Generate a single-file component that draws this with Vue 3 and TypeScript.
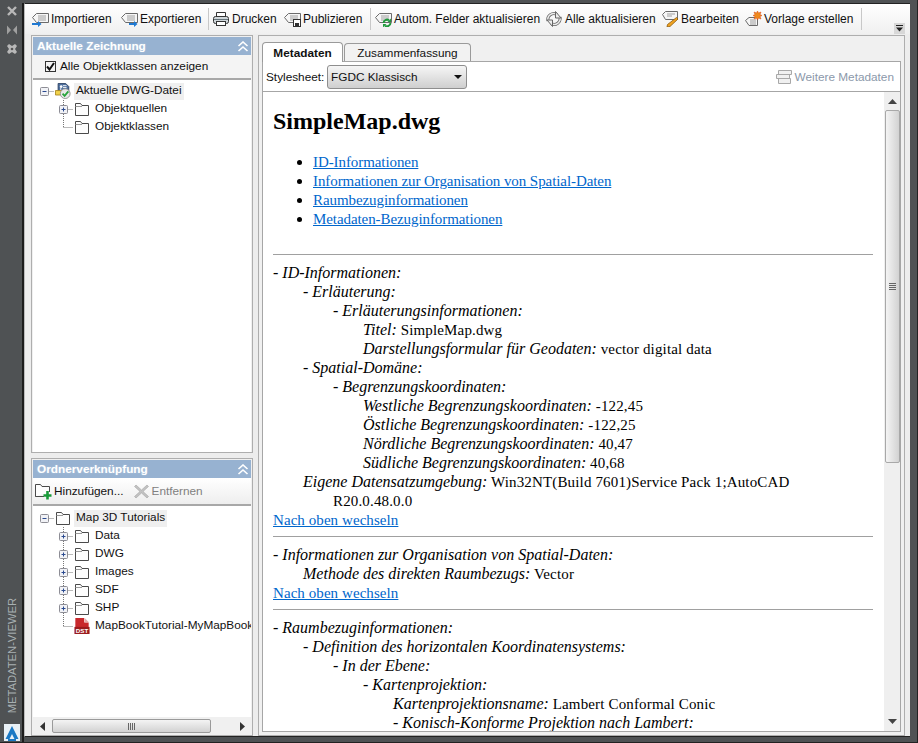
<script setup lang="ts">
interface Tool { label: string; icon: string; w: number; sep?: boolean }
interface Line { lvl: number; key?: string; val?: string; link?: string }
interface Node { label: string; kind: 'root' | 'child'; icon: string; toggle: boolean; last?: boolean }

const tools: Tool[] = [
  { label: 'Importieren', icon: 'i-import', w: 89 },
  { label: 'Exportieren', icon: 'i-export', w: 88, sep: true },
  { label: 'Drucken', icon: 'i-print', w: 71 },
  { label: 'Publizieren', icon: 'i-publish', w: 87, sep: true },
  { label: 'Autom. Felder aktualisieren', icon: 'i-auto', w: 171 },
  { label: 'Alle aktualisieren', icon: 'i-all', w: 116 },
  { label: 'Bearbeiten', icon: 'i-edit', w: 83 },
  { label: 'Vorlage erstellen', icon: 'i-new', w: 117, sep: true },
]

const links = [
  'ID-Informationen',
  'Informationen zur Organisation von Spatial-Daten',
  'Raumbezuginformationen',
  'Metadaten-Bezuginformationen',
]

const sections: Line[][] = [
  [
    { lvl: 0, key: '- ID-Informationen:' },
    { lvl: 1, key: '- Erläuterung:' },
    { lvl: 2, key: '- Erläuterungsinformationen:' },
    { lvl: 3, key: 'Titel:', val: 'SimpleMap.dwg' },
    { lvl: 3, key: 'Darstellungsformular für Geodaten:', val: 'vector digital data' },
    { lvl: 1, key: '- Spatial-Domäne:' },
    { lvl: 2, key: '- Begrenzungskoordinaten:' },
    { lvl: 3, key: 'Westliche Begrenzungskoordinaten:', val: '-122,45' },
    { lvl: 3, key: 'Östliche Begrenzungskoordinaten:', val: '-122,25' },
    { lvl: 3, key: 'Nördliche Begrenzungskoordinaten:', val: '40,47' },
    { lvl: 3, key: 'Südliche Begrenzungskoordinaten:', val: '40,68' },
    { lvl: 1, key: 'Eigene Datensatzumgebung:', val: 'Win32NT(Build 7601)Service Pack 1;AutoCAD R20.0.48.0.0' },
    { lvl: 0, link: 'Nach oben wechseln' },
  ],
  [
    { lvl: 0, key: '- Informationen zur Organisation von Spatial-Daten:' },
    { lvl: 1, key: 'Methode des direkten Raumbezugs:', val: 'Vector' },
    { lvl: 0, link: 'Nach oben wechseln' },
  ],
  [
    { lvl: 0, key: '- Raumbezuginformationen:' },
    { lvl: 1, key: '- Definition des horizontalen Koordinatensystems:' },
    { lvl: 2, key: '- In der Ebene:' },
    { lvl: 3, key: '- Kartenprojektion:' },
    { lvl: 4, key: 'Kartenprojektionsname:', val: 'Lambert Conformal Conic' },
    { lvl: 4, key: '- Konisch-Konforme Projektion nach Lambert:' },
  ],
]

const treeA: Node[] = [
  { label: 'Aktuelle DWG-Datei', kind: 'root', icon: 'i-dwg', toggle: true },
  { label: 'Objektquellen', kind: 'child', icon: 'i-folder', toggle: true },
  { label: 'Objektklassen', kind: 'child', icon: 'i-folder', toggle: false, last: true },
]
const treeB: Node[] = [
  { label: 'Map 3D Tutorials', kind: 'root', icon: 'i-folder', toggle: true },
  { label: 'Data', kind: 'child', icon: 'i-folder', toggle: true },
  { label: 'DWG', kind: 'child', icon: 'i-folder', toggle: true },
  { label: 'Images', kind: 'child', icon: 'i-folder', toggle: true },
  { label: 'SDF', kind: 'child', icon: 'i-folder', toggle: true },
  { label: 'SHP', kind: 'child', icon: 'i-folder', toggle: true },
  { label: 'MapBookTutorial-MyMapBook', kind: 'child', icon: 'i-dst', toggle: false, last: true },
]
const trees = { a: treeA, b: treeB }
</script>

<template>
  <div class="frame">
    <svg class="defs" aria-hidden="true">
      <symbol id="i-tag" viewBox="0 0 18 16">
        <path d="M1.500 6.500 5.500 2.500H17.500V11.500H5.500Z" fill="#f6f6f6" stroke="#6b6b6b" />
        <path d="M7 5H15M7 7H15M7 9H15" stroke="#a0a0a0" />
      </symbol>
      <symbol id="i-import" viewBox="0 0 18 16">
        <use href="#i-tag" width="18" height="16" />
        <path d="M1 12H7V10L10.500 13 7 16V14H1Z" fill="#1f79d2" />
      </symbol>
      <symbol id="i-export" viewBox="0 0 18 16">
        <use href="#i-tag" width="18" height="16" />
        <path d="M9 12H14V10L17.500 13 14 16V14H9Z" fill="#1f79d2" />
      </symbol>
      <symbol id="i-print" viewBox="0 0 18 16">
        <path d="M4.500 5.500V1.500H13.500V5.500" fill="#fff" stroke="#333" />
        <rect x="1.500" y="5.500" width="15" height="7" rx="2" fill="#cfd6da" stroke="#333" />
        <path d="M2 8.500H16" stroke="#66757c" />
        <rect x="4.500" y="10.500" width="9" height="4" fill="#fff" stroke="#333" />
      </symbol>
      <symbol id="i-publish" viewBox="0 0 18 16">
        <use href="#i-tag" width="18" height="16" />
        <rect x="10.500" y="8.500" width="7" height="7" fill="#fff" stroke="#333" />
        <rect x="12" y="12" width="4" height="3" fill="#333" />
      </symbol>
      <symbol id="i-auto" viewBox="0 0 18 16">
        <use href="#i-tag" width="18" height="16" />
        <path d="M9.500 12a3.500 3.500 0 0 1 5.500-2.700" fill="none" stroke="#1e9a3c" stroke-width="2" />
        <path d="M16.500 12a3.500 3.500 0 0 1-5.500 2.700" fill="none" stroke="#1e9a3c" stroke-width="2" />
        <path d="M13.500 11H17V7.500Z" fill="#1e9a3c" />
        <path d="M12.500 13H9V16.500Z" fill="#1e9a3c" />
      </symbol>
      <symbol id="i-all" viewBox="0 0 18 16">
        <g fill="none">
          <path d="M3 10a6 6 0 0 1 9-6.500" stroke="#666" stroke-width="3" />
          <path d="M15 6a6 6 0 0 1-9 6.500" stroke="#666" stroke-width="3" />
          <path d="M3 10a6 6 0 0 1 9-6.500" stroke="#ececec" stroke-width="1.500" />
          <path d="M15 6a6 6 0 0 1-9 6.500" stroke="#ececec" stroke-width="1.500" />
        </g>
        <path d="M10.500 .5V7H16Z" fill="#ececec" stroke="#666" />
        <path d="M7.500 15.500V9H2Z" fill="#ececec" stroke="#666" />
      </symbol>
      <symbol id="i-edit" viewBox="0 0 18 16">
        <path d="M1.500 3.500 4.500 .5H16.500V8.500H4.500Z" fill="#f6f6f6" stroke="#6b6b6b" />
        <path d="M6 3H14M6 5H11" stroke="#a0a0a0" />
        <path d="M15.500 6.500 17 8 9 15.500 6 16 6.500 13.500Z" fill="#f0a21f" stroke="#8a5a10" stroke-width=".8" />
      </symbol>
      <symbol id="i-new" viewBox="0 0 18 16">
        <path d="M1.500 9.500 5 6.500H13.500V14.500H5Z" fill="#f6f6f6" stroke="#6b6b6b" />
        <path d="M6 9H12M6 11H12M6 13H12" stroke="#a0a0a0" />
        <path d="M13.500 0 14.500 2 17 1 16 3.500 18 4.500 16 5.500 17 8 14.500 7 13.500 9 12.500 7 10 8 11 5.500 9 4.500 11 3.500 10 1 12.500 2Z" fill="#ee8a1d" stroke="#d8440f" stroke-width=".5" />
      </symbol>
      <symbol id="i-folder" viewBox="0 0 16 16">
        <path d="M1.500 14.500V2.500H6.500L8 4.500H14.500V14.500Z" fill="#fdfdfd" stroke="#4a4a4a" />
        <path d="M1.500 5.500H8" stroke="#9a9a9a" />
      </symbol>
      <symbol id="i-dwg" viewBox="0 0 18 18">
        <path d="M3.500 .5H12L15.500 4V12H3.500Z" fill="#4d6f9e" stroke="#2b3f60" />
        <circle cx="7" cy="4" r="1.500" fill="#fff" />
        <path d="M6.500 5V10M9 3H13M9 5H13" stroke="#fff" />
        <path d="M.5 8.500H8V13.500H.5Z" fill="#f1d24a" stroke="#a8861f" />
        <circle cx="11.500" cy="12" r="5.500" fill="#e8e8e8" stroke="#8f8f8f" />
        <path d="M8.500 12 10.800 14.500 15 9.500" fill="none" stroke="#27a43c" stroke-width="2" />
      </symbol>
      <symbol id="i-dst" viewBox="0 0 17 18">
        <path d="M1 0H11V5H16V11H1Z" fill="#c8282c" />
        <path d="M11.500 0 16 4.500H11.500Z" fill="#e8a8a8" />
        <path d="M0 10H17V18H0Z" fill="#9b1b1e" />
        <text x="8.500" y="16.500" text-anchor="middle" font-family="Liberation Sans" font-size="7" font-weight="700" fill="#fff">DST</text>
      </symbol>
      <symbol id="i-stack" viewBox="0 0 17 16">
        <path d="M3.500 1.500H16.500V5.500H3.500ZM1.500 5.500H14.500V9.500H1.500ZM3.500 9.500H15.500V14.500H3.500Z" fill="#f0f0f0" stroke="#a8a8a8" />
      </symbol>
      <symbol id="i-add" viewBox="0 0 17 17">
        <path d="M.5 13.500V1.500H5.500L7 3.500H14.500V9M9 13.500H.5Z" fill="#fdfdfd" stroke="#4a4a4a" />
        <path d="M12.500 8V16.500M8.500 12.500H16.500" stroke="#189a38" stroke-width="2.600" />
      </symbol>
      <symbol id="i-x" viewBox="0 0 15 15">
        <path d="M2 1 7.500 6 13 1 14.500 2.500 9 7.500 14.500 12.500 13 14 7.500 9 2 14 .5 12.500 6 7.500 .5 2.500Z" fill="#c2c2c2" stroke="#a4a4a4" stroke-width=".6" />
      </symbol>
      <symbol id="i-chev" viewBox="0 0 12 11">
        <path d="M1.500 5 6 1 10.500 5M1.500 10 6 6 10.500 10" fill="none" stroke="#fff" stroke-width="1.600" />
      </symbol>
    </svg>

    <aside class="strip">
      <svg class="strip-ic" viewBox="0 0 12 12" width="12" height="12"><path d="M2 2 10 10M10 2 2 10" stroke="#b8b8b8" stroke-width="2.400" /></svg>
      <svg class="strip-ic" viewBox="0 0 12 12" width="12" height="12"><path d="M1 1.500 5 6 1 10.500ZM11 1.500 7 6 11 10.500Z" fill="#a0a0a0" /></svg>
      <svg class="strip-ic" viewBox="0 0 12 12" width="12" height="12"><path d="M1 3 3 1 6 3 9 1 11 3 9 6 11 9 9 11 6 9 3 11 1 9 3 6Z" fill="#b8b8b8" /><circle cx="6" cy="6" r="1.300" fill="#555" /></svg>
      <div class="strip-fill"></div>
      <span class="strip-title">METADATEN-VIEWER</span>
      <div class="logo">
        <svg viewBox="0 0 16 16" width="16" height="16"><path d="M8 1 14.500 14H10.500L8 9 5.500 14H1.500Z" fill="#1a78c4" /><path d="M4 15H12" stroke="#1a78c4" stroke-width="2" /></svg>
      </div>
    </aside>

    <div class="window">
      <div class="toolbar">
        <template v-for="t in tools" :key="t.label">
          <div class="tool" :style="{ width: t.w + 'px' }">
            <svg class="tool-ic" width="18" height="16"><use :href="'#' + t.icon" width="18" height="16" /></svg>
            <span>{{ t.label }}</span>
          </div>
          <i v-if="t.sep" class="tool-sep"></i>
        </template>
        <div class="tool-fill"></div>
        <div class="overflow"><svg width="7" height="7" viewBox="0 0 7 7"><path d="M0 .5H7" stroke="#222" /><path d="M0 2.500H7L3.500 6.500Z" fill="#222" /></svg></div>
      </div>

      <div class="body">
        <div class="left">
          <section class="panel panel-top">
            <header class="phead"><span>Aktuelle Zeichnung</span><svg width="12" height="11"><use href="#i-chev" width="12" height="11" /></svg></header>
            <label class="check-row"><span class="check"><svg width="9" height="9" viewBox="0 0 9 9"><path d="M1 4.500 3.500 7.500 8 1" fill="none" stroke="#111" stroke-width="2" /></svg></span><span class="check-text">Alle Objektklassen anzeigen</span></label>
            <div class="tree tree-a">
              <div v-for="n in trees.a" :key="n.label" class="row" :class="n.kind">
                <svg class="conn" width="20" height="18" viewBox="0 0 20 18">
                  <path v-if="n.kind === 'child'" :d="n.last ? 'M9.500 0V9.500' : 'M9.500 0V18'" stroke="#777" stroke-dasharray="1 1" />
                  <path d="M9.500 9.500H19" stroke="#777" stroke-dasharray="1 1" />
                  <template v-if="n.toggle">
                    <rect x="5.500" y="5.500" width="8" height="8" rx="1" fill="#f1f2f6" stroke="#8d8d95" />
                    <path d="M7.500 9.500H11.500" stroke="#2a4a90" />
                    <path v-if="n.kind === 'child'" d="M9.500 7.500V11.500" stroke="#2a4a90" />
                  </template>
                </svg>
                <svg class="node-ic" width="16" height="16"><use :href="'#' + n.icon" width="16" height="16" /></svg>
                <span class="label">{{ n.label }}</span>
              </div>
            </div>
          </section>

          <section class="panel panel-bottom">
            <header class="phead"><span>Ordnerverknüpfung</span><svg width="12" height="11"><use href="#i-chev" width="12" height="11" /></svg></header>
            <div class="folder-bar">
              <div class="tool"><svg width="17" height="17"><use href="#i-add" width="17" height="17" /></svg><span>Hinzufügen...</span></div>
              <div class="tool off"><svg width="15" height="15"><use href="#i-x" width="15" height="15" /></svg><span>Entfernen</span></div>
            </div>
            <div class="tree tree-b">
              <div v-for="n in trees.b" :key="n.label" class="row" :class="n.kind">
                <svg class="conn" width="20" height="18" viewBox="0 0 20 18">
                  <path v-if="n.kind === 'child'" :d="n.last ? 'M9.500 0V9.500' : 'M9.500 0V18'" stroke="#777" stroke-dasharray="1 1" />
                  <path d="M9.500 9.500H19" stroke="#777" stroke-dasharray="1 1" />
                  <template v-if="n.toggle">
                    <rect x="5.500" y="5.500" width="8" height="8" rx="1" fill="#f1f2f6" stroke="#8d8d95" />
                    <path d="M7.500 9.500H11.500" stroke="#2a4a90" />
                    <path v-if="n.kind === 'child'" d="M9.500 7.500V11.500" stroke="#2a4a90" />
                  </template>
                </svg>
                <svg class="node-ic" width="16" height="16"><use :href="'#' + n.icon" width="16" height="16" /></svg>
                <span class="label">{{ n.label }}</span>
              </div>
            </div>
            <div class="hscroll">
              <svg width="5" height="9" viewBox="0 0 5 9"><path d="M5 0V9L0 4.500Z" fill="#333" /></svg>
              <div class="hthumb"><i></i><i></i><i></i><i></i></div>
              <svg width="5" height="9" viewBox="0 0 5 9"><path d="M0 0V9L5 4.500Z" fill="#333" /></svg>
            </div>
          </section>
        </div>

        <section class="right">
          <div class="tabs">
            <div class="tab active">Metadaten</div>
            <div class="tab">Zusammenfassung</div>
          </div>
          <div class="tabbody">
            <div class="style-row">
              <span class="style-label">Stylesheet:</span>
              <div class="select"><span>FGDC Klassisch</span><svg width="8" height="4" viewBox="0 0 8 4"><path d="M0 0H8L4 4Z" fill="#111" /></svg></div>
              <div class="more"><svg width="17" height="16"><use href="#i-stack" width="17" height="16" /></svg><span>Weitere Metadaten</span></div>
            </div>
            <div class="docwrap">
              <article class="doc">
                <h1>SimpleMap.dwg</h1>
                <ul>
                  <li v-for="l in links" :key="l"><a href="#">{{ l }}</a></li>
                </ul>
                <template v-for="(sec, si) in sections" :key="si">
                  <hr />
                  <p v-for="(ln, li) in sec" :key="li" class="ln" :class="'lvl' + ln.lvl">
                    <a v-if="ln.link" href="#" class="top">{{ ln.link }}</a>
                    <template v-else><em>{{ ln.key }}</em><span v-if="ln.val" class="val">{{ ' ' + ln.val }}</span></template>
                  </p>
                </template>
              </article>
              <div class="vscroll">
                <svg width="9" height="5" viewBox="0 0 9 5"><path d="M0 5H9L4.500 0Z" fill="#444" /></svg>
                <div class="vthumb"><i></i><i></i><i></i><i></i></div>
                <div class="vtrack"></div>
                <svg width="9" height="5" viewBox="0 0 9 5"><path d="M0 0H9L4.500 5Z" fill="#444" /></svg>
              </div>
            </div>
          </div>
        </section>
      </div>
    </div>
  </div>
</template>

<style>
html, body { margin: 0; background: #555; }
</style>

<style scoped>
* { box-sizing: border-box; }
.defs { display: none; }
.frame {
  width: 918px; height: 743px; display: flex; overflow: hidden;
  background: #4f5254; padding: 3px 7px 5px 0;
  font: 11.8px/18px "Liberation Sans", Arial, sans-serif; color: #111;
  border-right: 1px solid #222; border-bottom: 1px solid #222;
}
.strip { width: 24px; margin-bottom: -5px; padding: 2px 0 2px 2px; flex: none; display: flex; flex-direction: column; align-items: center; border-right: 2px solid #1c1c1c; }
.strip-ic { margin: 0 0 7px; }
.strip-fill { flex: 1; }
.strip-title {
  writing-mode: vertical-rl; transform: rotate(180deg); color: #a8b0b2;
  font-size: 11.2px; line-height: 14px; margin-bottom: 11px;
}
.logo { width: 16px; height: 17px; background: #e8f0f6; display: flex; align-items: center; justify-content: center; margin-bottom: -1px; }
.window { flex: 1; min-width: 0; display: flex; flex-direction: column; background: #ededed; border-top: 1px solid #222; border-left: 1px solid #bbb; border-bottom: 1px solid #222; }

.toolbar { height: 30px; display: flex; align-items: center; background: linear-gradient(#fff, #f0f0f0); padding-left: 6px; flex: none; font-size: 12px; }
.tool { display: flex; align-items: center; gap: 2px; white-space: nowrap; flex: none; }
.tool-sep { width: 1px; height: 22px; background: #c8c8c8; margin-right: 3px; flex: none; }
.tool-fill { flex: 1; }
.overflow { width: 11px; height: 11px; background: #d8d8d8; align-self: flex-end; display: flex; align-items: center; justify-content: center; margin-right: 5px; }

.body { flex: 1; min-height: 0; display: flex; padding: 1px 5px 0 6px; gap: 5px; }
.left { width: 222px; flex: none; display: flex; flex-direction: column; gap: 5px; }
.panel { background: #f0f0f0; border: 1px solid #aeaeae; padding: 1px 1px 0; display: flex; flex-direction: column; min-height: 0; }
.panel-top { height: 418px; flex: none; }
.panel-bottom { flex: 1; }
.phead { height: 18px; background: #97b2d1; display: flex; align-items: center; justify-content: space-between; padding: 0 2px 0 4px; color: #fff; font-weight: 700; flex: none; text-shadow: 0 0 2px #b8cce0; }
.check-row { height: 23px; display: flex; align-items: center; padding-left: 12px; gap: 4px; border-bottom: 2px solid #a8a8a8; box-sizing: content-box; flex: none; background: #f4f4f4; }
.check-text { padding-bottom: 2px; }
.check { width: 11px; height: 11px; background: #f4f4f4; border: 1px solid #333; display: flex; align-items: center; justify-content: center; }
.tree { flex: 1; background: #fff; min-height: 0; overflow: hidden; }
.tree-a { padding-top: 2px; }
.tree-b { padding-top: 3px; }
.row { height: 18px; display: flex; align-items: center; white-space: nowrap; }
.row.root { padding-left: 2px; }
.row.child { padding-left: 21px; }
.conn { flex: none; }
.node-ic { flex: none; }
.label { margin-left: 3px; padding: 0 2px 2px; line-height: 15px; }
.root .label { background: #efefef; }
.folder-bar { height: 26px; display: flex; align-items: center; flex: none; padding-left: 2px; gap: 10px; border-bottom: 2px solid #a8a8a8; background: linear-gradient(#fff, #eee); box-sizing: content-box; }
.folder-bar span { padding-bottom: 1px; }
.folder-bar .off { color: #808080; gap: 3px; }
.hscroll { height: 18px; background: #f0f0f0; flex: none; display: flex; align-items: center; padding: 0 6px 0 7px; }
.hthumb { width: 159px; margin-left: 7px; margin-right: auto; height: 14px; border: 1px solid #9a9a9a; border-radius: 2px; background: linear-gradient(#f4f4f4, #d2d2d2); display: flex; align-items: center; justify-content: center; gap: 1px; }
.hthumb i { width: 1px; height: 7px; background: #666; }

.right { flex: 1; min-width: 0; background: #f0f0f0; border: 1px solid #aeaeae; padding: 5px 3px 3px; display: flex; flex-direction: column; }
.tabs { height: 20px; display: flex; align-items: flex-end; flex: none; }
.tab { height: 18px; width: 127px; margin-left: 1px; border: 1px solid #9a9a9a; border-bottom: 0; border-radius: 4px 4px 0 0; text-align: center; line-height: 18px; background: #f2f2f2; }
.tab.active { height: 20px; width: 81px; margin-left: 0; background: #fff; font-weight: 700; line-height: 21px; margin-bottom: -1px; position: relative; z-index: 1; }
.tabbody { flex: 1; min-height: 0; border: 1px solid #a6a6a6; display: flex; flex-direction: column; }
.style-row { height: 30px; flex: none; display: flex; align-items: center; background: #fff; border-bottom: 1px solid #a6a6a6; padding-left: 3px; }
.style-label { width: 61px; }
.select { width: 140px; height: 24px; border: 1px solid #8e8e8e; border-radius: 3px; background: linear-gradient(#f6f6f6, #cfcfcf); display: flex; align-items: center; justify-content: space-between; padding: 0 4px 0 3px; }
.more { margin-left: auto; display: flex; align-items: center; gap: 3px; color: #8b98aa; padding-right: 6px; }
.docwrap { flex: 1; min-height: 0; display: flex; background: #fff; }
.doc { flex: 1; min-width: 0; overflow: hidden; padding: 15px 11px 0 10px; font: 16px/19px "Liberation Serif", "Times New Roman", serif; color: #000; }
h1 { font-size: 24px; line-height: 28px; font-weight: 700; margin: 0 0 17px; }
ul { margin: 0 0 26px; padding-left: 40px; }
li a { font-size: 15px; letter-spacing: -.08px; line-height: 0; }
a { color: #0066cc; text-decoration: underline; }
.top { font-size: 15px; letter-spacing: .07px; line-height: 0; }
.val { font-size: 15px; letter-spacing: .15px; line-height: 0; }
hr { border: 0; height: 1px; background: #a0a0a0; margin: 7px 0 8px; }
.ln { margin: 0; }
.lvl1 { padding-left: 60px; padding-right: 20px; text-indent: -30px; }
.lvl2 { padding-left: 60px; }
.lvl3 { padding-left: 90px; }
.lvl4 { padding-left: 120px; }
.vscroll { width: 16px; flex: none; background: #efefef; display: flex; flex-direction: column; align-items: center; padding: 7px 0 7px; }
.vthumb { width: 15px; height: 353px; margin-top: 6px; border: 1px solid #a8a8a8; border-radius: 2px; background: linear-gradient(90deg, #f4f4f4, #d2d2d2); display: flex; flex-direction: column; align-items: center; justify-content: center; gap: 1px; flex: none; }
.vthumb i { width: 7px; height: 1px; background: #666; }
.vtrack { flex: 1; }
</style>
